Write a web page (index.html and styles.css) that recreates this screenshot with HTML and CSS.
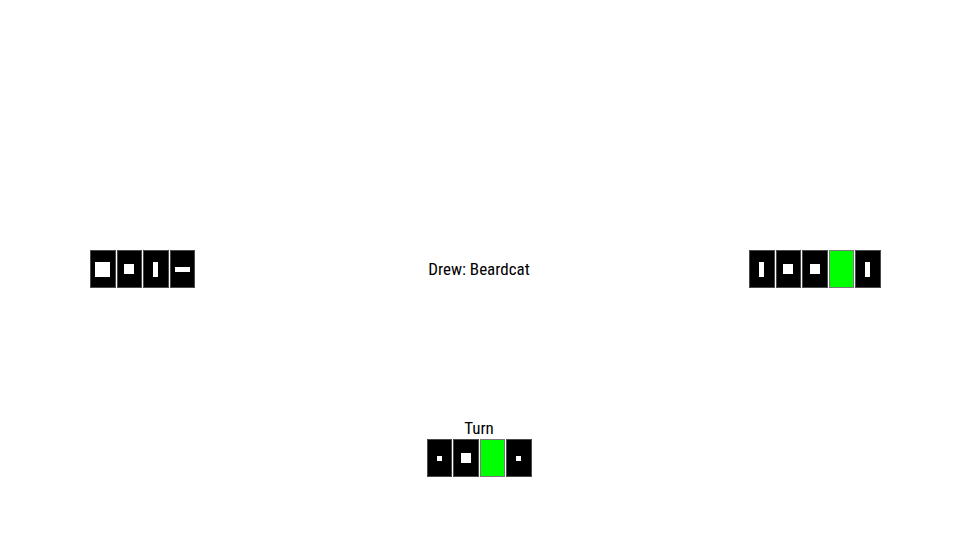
FILE: index.html
```html
<!DOCTYPE html>
<html>
<head>
<meta charset="utf-8">
<link rel="stylesheet" href="styles.css">
</head>
<body>
<div class="page">
  <div class="row">
    <div class="hand hand-left">
      <div class="card"><div class="sq-lg"></div></div>
      <div class="card"><div class="sq-md"></div></div>
      <div class="card"><div class="bar-v"></div></div>
      <div class="card"><div class="bar-h"></div></div>
    </div>
    <div class="status">Drew: Beardcat</div>
    <div class="hand hand-right">
      <div class="card"><div class="bar-v"></div></div>
      <div class="card"><div class="sq-md"></div></div>
      <div class="card"><div class="sq-md"></div></div>
      <div class="card green"></div>
      <div class="card"><div class="bar-v"></div></div>
    </div>
  </div>
  <div class="bottom">
    <div class="label">Turn</div>
    <div class="hand">
      <div class="card"><div class="sq-sm"></div></div>
      <div class="card"><div class="sq-md"></div></div>
      <div class="card green"></div>
      <div class="card"><div class="sq-sm"></div></div>
    </div>
  </div>
</div>
</body>
</html>
```

FILE: styles.css
```css
html, body {
  margin: 0;
  padding: 0;
  background: #ffffff;
}
body {
  font-family: Roboto, "Liberation Sans", sans-serif;
  font-stretch: 75%;
  color: #000;
}
.page {
  width: 960px;
  height: 540px;
  display: flex;
  flex-direction: column;
  padding-top: 250px;
  box-sizing: border-box;
}
.row {
  display: flex;
  align-items: center;
  height: 38px;
  padding-left: 90px;
}
.hand {
  display: flex;
  gap: 1px;
}
.card {
  width: 25.5px;
  height: 38px;
  box-sizing: border-box;
  border: 1px solid #4a4a4a;
  background: #000;
  display: flex;
  align-items: center;
  justify-content: center;
}
.card.green {
  background: #00ff00;
  border-color: #7a7a7a;
}
.sq-lg { width: 15px; height: 15px; background: #fff; }
.sq-md { width: 10px; height: 10px; background: #fff; }
.sq-sm { width: 5px; height: 5px; background: #fff; }
.bar-v { width: 5px; height: 15px; background: #fff; }
.bar-h { width: 15px; height: 5px; background: #fff; }
.status {
  width: 300px;
  margin: 0 120px 0 134px;
  text-align: center;
  font-size: 17px;
  line-height: 22px;
}
.bottom {
  margin-top: 130px;
  display: flex;
  flex-direction: column;
  align-items: center;
  padding-right: 2px;
}
.label {
  font-size: 17px;
  line-height: 21px;
}
```
